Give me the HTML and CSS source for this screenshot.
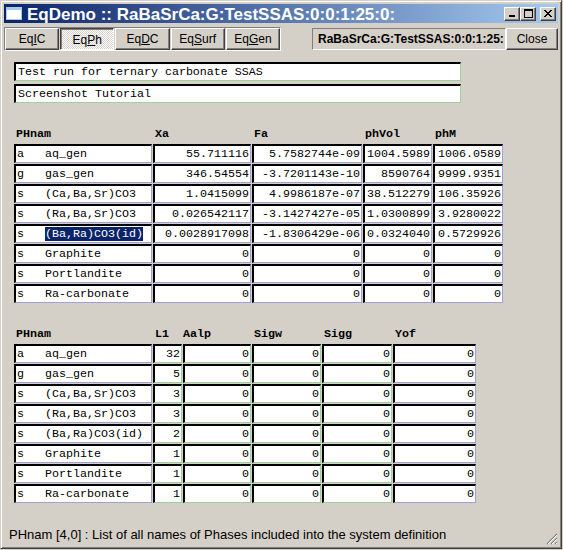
FILE: index.html
```html
<!DOCTYPE html>
<html>
<head>
<meta charset="utf-8">
<link rel="stylesheet" href="styles.css">
</head>
<body>
<div class="window">
  <div class="titlebar">
    <svg class="app-icon" width="16" height="13" viewBox="0 0 16 13"><rect x="0.5" y="0.5" width="15" height="12" fill="#fff" stroke="#a6caf0"/><rect x="1" y="1" width="14" height="2" fill="#a6caf0"/></svg>
    <span class="title">EqDemo :: RaBaSrCa:G:TestSSAS:0:0:1:25:0:</span>
    <div class="caption">
      <div class="cbtn"><svg width="8" height="7" viewBox="0 0 8 7"><rect x="1" y="5" width="6" height="2" fill="#000"/></svg></div>
      <div class="cbtn"><svg width="9" height="9" viewBox="0 0 9 9"><path d="M0 0h9v9H0zM1 2v6h7V2z" fill="#000" fill-rule="evenodd"/></svg></div>
      <div class="cbtn close-x"><svg width="8" height="7" viewBox="0 0 8 7"><path d="M0 0h2v1H0zM6 0h2v1H6zM1 1h2v1H1zM5 1h2v1H5zM2 2h4v1H2zM3 3h2v1H3zM2 4h4v1H2zM1 5h2v1H1zM5 5h2v1H5zM0 6h2v1H0zM6 6h2v1H6z" fill="#000"/></svg></div>
    </div>
  </div>

  <div class="toolbar">
    <div class="tabs">
      <div class="tab">Eq<u>I</u>C</div>
      <div class="tab active">Eq<u>P</u>h</div>
      <div class="tab">Eq<u>D</u>C</div>
      <div class="tab">Eq<u>S</u>urf</div>
      <div class="tab">Eq<u>G</u>en</div>
    </div>
    <div class="spacer"></div>
    <div class="label">RaBaSrCa:G:TestSSAS:0:0:1:25:</div>
    <div class="button">Close</div>
  </div>

  <div class="content">
    <div class="field grn">Test run for ternary carbonate SSAS</div>
    <div class="field grn">Screenshot Tutorial</div>

    <div class="grid grid1">
      <div class="h">PHnam</div><div class="h">Xa</div><div class="h">Fa</div><div class="h">phVol</div><div class="h">phM</div>

      <div class="c lav">a   aq_gen</div><div class="c lav num">55.711116</div><div class="c lav num">5.7582744e-09</div><div class="c lav num">1004.5989</div><div class="c lav num">1006.0589</div>
      <div class="c lav">g   gas_gen</div><div class="c lav num">346.54554</div><div class="c lav num">-3.7201143e-10</div><div class="c lav num">8590764</div><div class="c lav num">9999.9351</div>
      <div class="c lav">s   (Ca,Ba,Sr)CO3</div><div class="c lav num">1.0415099</div><div class="c lav num">4.9986187e-07</div><div class="c lav num">38.512279</div><div class="c lav num">106.35926</div>
      <div class="c lav">s   (Ra,Ba,Sr)CO3</div><div class="c lav num">0.026542117</div><div class="c lav num">-3.1427427e-05</div><div class="c lav num">1.0300899</div><div class="c lav num">3.9280022</div>
      <div class="c lav">s   <span class="sel">(Ba,Ra)CO3(id)</span></div><div class="c lav num">0.0028917098</div><div class="c lav num">-1.8306429e-06</div><div class="c lav num">0.0324040</div><div class="c lav num">0.5729926</div>
      <div class="c lav">s   Graphite</div><div class="c lav num">0</div><div class="c lav num">0</div><div class="c lav num">0</div><div class="c lav num">0</div>
      <div class="c lav">s   Portlandite</div><div class="c lav num">0</div><div class="c lav num">0</div><div class="c lav num">0</div><div class="c lav num">0</div>
      <div class="c lav">s   Ra-carbonate</div><div class="c lav num">0</div><div class="c lav num">0</div><div class="c lav num">0</div><div class="c lav num">0</div>
    </div>

    <div class="grid grid2">
      <div class="h">PHnam</div><div class="h">L1</div><div class="h h0">Aalp</div><div class="h">Sigw</div><div class="h">Sigg</div><div class="h">Yof</div>

      <div class="c lav">a   aq_gen</div><div class="c grn num">32</div><div class="c grn num">0</div><div class="c grn num">0</div><div class="c grn num">0</div><div class="c lav num">0</div>
      <div class="c lav">g   gas_gen</div><div class="c grn num">5</div><div class="c grn num">0</div><div class="c grn num">0</div><div class="c grn num">0</div><div class="c lav num">0</div>
      <div class="c lav">s   (Ca,Ba,Sr)CO3</div><div class="c grn num">3</div><div class="c grn num">0</div><div class="c grn num">0</div><div class="c grn num">0</div><div class="c lav num">0</div>
      <div class="c lav">s   (Ra,Ba,Sr)CO3</div><div class="c grn num">3</div><div class="c grn num">0</div><div class="c grn num">0</div><div class="c grn num">0</div><div class="c lav num">0</div>
      <div class="c lav">s   (Ba,Ra)CO3(id)</div><div class="c grn num">2</div><div class="c grn num">0</div><div class="c grn num">0</div><div class="c grn num">0</div><div class="c lav num">0</div>
      <div class="c lav">s   Graphite</div><div class="c grn num">1</div><div class="c grn num">0</div><div class="c grn num">0</div><div class="c grn num">0</div><div class="c lav num">0</div>
      <div class="c lav">s   Portlandite</div><div class="c grn num">1</div><div class="c grn num">0</div><div class="c grn num">0</div><div class="c grn num">0</div><div class="c lav num">0</div>
      <div class="c lav">s   Ra-carbonate</div><div class="c grn num">1</div><div class="c grn num">0</div><div class="c grn num">0</div><div class="c grn num">0</div><div class="c lav num">0</div>
    </div>
  </div>

  <div class="status">
    <span class="status-text">PHnam [4,0] : List of all names of Phases included into the system definition</span>
    <svg class="grip" width="12" height="12" viewBox="0 0 12 12"><path d="M11 1L1 11M11 5L5 11M11 9L9 11" stroke="#808080" stroke-width="1.2"/><path d="M11 2L2 11M11 6L6 11M11 10L10 11" stroke="#ffffff" stroke-width="1"/></svg>
  </div>
</div>
</body>
</html>
```

FILE: styles.css
```css
* { box-sizing: border-box; }

body {
  margin: 0;
  background: #d4d0c8;
  font-family: "Liberation Sans", Arial, sans-serif;
}

.window {
  width: 562px;
  height: 549px;
  border: 1px solid;
  border-color: #d4d0c8 #404040 #404040 #d4d0c8;
  box-shadow: inset 1px 1px #ffffff, inset -1px -1px #808080;
  padding: 3px;
  display: flex;
  flex-direction: column;
  background: #d4d0c8;
}

/* title bar */
.titlebar {
  height: 19px;
  flex: none;
  display: flex;
  align-items: center;
  padding: 0 2px;
  background: linear-gradient(to right, #0a246a, #a6caf0);
  color: #fff;
}
.app-icon { flex: none; display: block; }
.title {
  margin-left: 5px;
  font-weight: bold;
  font-size: 17px;
  line-height: 17px;
  padding-top: 2px;
  white-space: nowrap;
}
.caption {
  margin-left: auto;
  display: flex;
  align-items: center;
}
.cbtn {
  width: 16px;
  height: 14px;
  border: 1px solid;
  border-color: #ffffff #404040 #404040 #ffffff;
  box-shadow: inset -1px -1px #808080;
  background: #d4d0c8;
  display: flex;
  align-items: center;
  justify-content: center;
}
.cbtn svg { display: block; }
.close-x { margin-left: 4px; }

/* toolbar */
.toolbar {
  margin-top: 4px;
  height: 24px;
  flex: none;
  display: flex;
  align-items: center;
}
.tabs {
  width: 277px;
  height: 24px;
  border: 1px solid;
  border-color: #808080 #ffffff #ffffff #808080;
  display: flex;
  gap: 1px;
}
.tab {
  flex: 1;
  height: 22px;
  border: 1px solid;
  border-color: #ffffff #404040 #404040 #ffffff;
  box-shadow: inset -1px -1px #808080;
  background: #d4d0c8;
  font-family: "Liberation Sans Narrow", "Arial Narrow", "Liberation Sans", sans-serif;
  font-size: 12px;
  line-height: 20px;
  text-align: center;
  color: #000;
}
.tab.active {
  border-color: #404040 #ffffff #ffffff #404040;
  box-shadow: inset 1px 1px #808080;
  background: repeating-conic-gradient(#ffffff 0 25%, #d4d0c8 0 50%) 0 0 / 2px 2px;
  padding-top: 1px;
}
.spacer { flex: 1; }
.label {
  width: 194px;
  height: 22px;
  border: 1px solid;
  border-color: #808080 #ffffff #ffffff #808080;
  padding-left: 5px;
  font-weight: bold;
  font-size: 12px;
  line-height: 20px;
  white-space: nowrap;
  overflow: hidden;
  color: #000;
}
.button {
  width: 52px;
  height: 22px;
  border: 1px solid;
  border-color: #ffffff #404040 #404040 #ffffff;
  box-shadow: inset -1px -1px #808080;
  background: #d4d0c8;
  font-family: "Liberation Sans Narrow", "Arial Narrow", "Liberation Sans", sans-serif;
  font-size: 12px;
  line-height: 20px;
  text-align: center;
  color: #000;
}

/* content */
.content {
  padding-left: 10px;
  margin-top: 11px;
}
.field, .c {
  height: 19px;
  border-top: 2px solid #000;
  border-left: 2px solid #000;
  border-right: 1px solid var(--edge);
  border-bottom: 1px solid var(--edge);
  background: #fff;
  font-family: "Liberation Mono", "Courier New", monospace;
  font-size: 11.67px;
  line-height: 15px;
  padding-top: 1px;
  white-space: pre;
  overflow: hidden;
  color: #000;
}
.field {
  width: 447px;
  padding-left: 2px;
}
.field + .field { margin-top: 3px; }
.lav { --edge: #a39fd6; }
.grn { --edge: #9bd29b; }

.grid {
  display: grid;
  gap: 1px;
  margin-top: 23px;
  grid-template-rows: 17px repeat(8, 19px);
}
.grid1 { grid-template-columns: 138px 98px 110px 69px 70px; }
.grid2 { grid-template-columns: 138px 29px 68px 69px 70px 83px; }

.h {
  font-family: "Liberation Mono", "Courier New", monospace;
  font-weight: bold;
  font-size: 11.67px;
  line-height: 16px;
  padding-left: 2px;
  white-space: pre;
  color: #000;
}
.h0 { padding-left: 0; }
.c { padding-left: 1px; padding-right: 1px; }
.num { text-align: right; }
.sel { background: #0a246a; color: #fff; }

/* status bar */
.status {
  margin-top: auto;
  height: 18px;
  display: flex;
  align-items: flex-end;
  padding-left: 5px;
}
.status-text {
  font-size: 13px;
  line-height: 15px;
  align-self: flex-start;
  color: #000;
  white-space: nowrap;
}
.grip { margin-left: auto; display: block; }
```
